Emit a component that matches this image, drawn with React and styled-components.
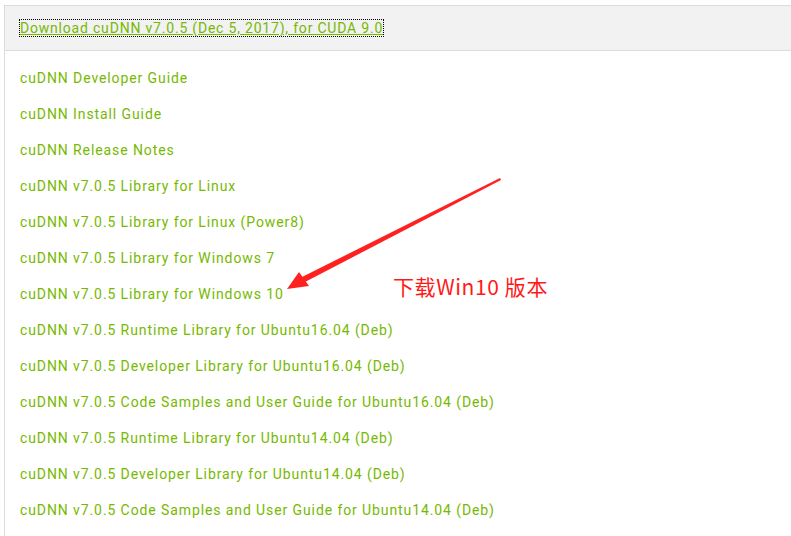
import React from "react";
import styled, { createGlobalStyle } from "styled-components";

const Global = createGlobalStyle`
  html, body { margin: 0; padding: 0; background: #fff; }
  body { font-family: "Roboto", "Liberation Sans", sans-serif; }
`;

const Page = styled.div`
  position: relative;
  width: 791px;
  height: 536px;
  overflow: hidden;
  padding-top: 5px;
  box-sizing: border-box;
`;

const Panel = styled.div`
  margin-left: 4px;
  border-left: 1px solid #dcdcdc;
  height: 100%;
`;

const Header = styled.div`
  height: 44px;
  background: #f2f2f2;
  border-top: 1px solid #dcdcdc;
  border-bottom: 1px solid #dcdcdc;
  display: flex;
  align-items: center;
  padding-left: 15px;
`;

const HeaderLink = styled.a`
  color: #76b900;
  font-size: 14px;
  letter-spacing: 0.8px;
  text-decoration: underline;
  outline: 1px dotted #000;
  line-height: 16px;
`;

const List = styled.ul`
  list-style: none;
  margin: 0;
  padding: 9px 0 0 15px;
  display: flex;
  flex-direction: column;
`;

const Item = styled.li`
  height: 36px;
  display: flex;
  align-items: center;
  color: #76b900;
  font-size: 14px;
  letter-spacing: 0.9px;
`;

const Annotation = styled.div`
  position: absolute;
  left: 393px;
  top: 272px;
  color: #ff1a1a;
  font-size: 21px;
  letter-spacing: 0.6px;
  font-family: "Noto Sans CJK SC", sans-serif;
  line-height: 28px;
  white-space: nowrap;
`;

const Arrow = styled.svg`
  position: absolute;
  left: 0;
  top: 0;
  pointer-events: none;
`;

const items = [
  "cuDNN Developer Guide",
  "cuDNN Install Guide",
  "cuDNN Release Notes",
  "cuDNN v7.0.5 Library for Linux",
  "cuDNN v7.0.5 Library for Linux (Power8)",
  "cuDNN v7.0.5 Library for Windows 7",
  "cuDNN v7.0.5 Library for Windows 10",
  "cuDNN v7.0.5 Runtime Library for Ubuntu16.04 (Deb)",
  "cuDNN v7.0.5 Developer Library for Ubuntu16.04 (Deb)",
  "cuDNN v7.0.5 Code Samples and User Guide for Ubuntu16.04 (Deb)",
  "cuDNN v7.0.5 Runtime Library for Ubuntu14.04 (Deb)",
  "cuDNN v7.0.5 Developer Library for Ubuntu14.04 (Deb)",
  "cuDNN v7.0.5 Code Samples and User Guide for Ubuntu14.04 (Deb)",
];

export default function App() {
  return (
    <Page>
      <Global />
      <Panel>
        <Header>
          <HeaderLink>Download cuDNN v7.0.5 (Dec 5, 2017), for CUDA 9.0</HeaderLink>
        </Header>
        <List>
          {items.map((t) => (
            <Item key={t}>{t}</Item>
          ))}
        </List>
      </Panel>
      <Arrow width="791" height="536" viewBox="0 0 791 536">
        <polygon points="500,178 501,180 305,282 302,277" fill="#ff2020" />
        <polygon points="287,289 299,272 309,286" fill="#ff2020" />
      </Arrow>
      <Annotation>下载Win10 版本</Annotation>
    </Page>
  );
}
